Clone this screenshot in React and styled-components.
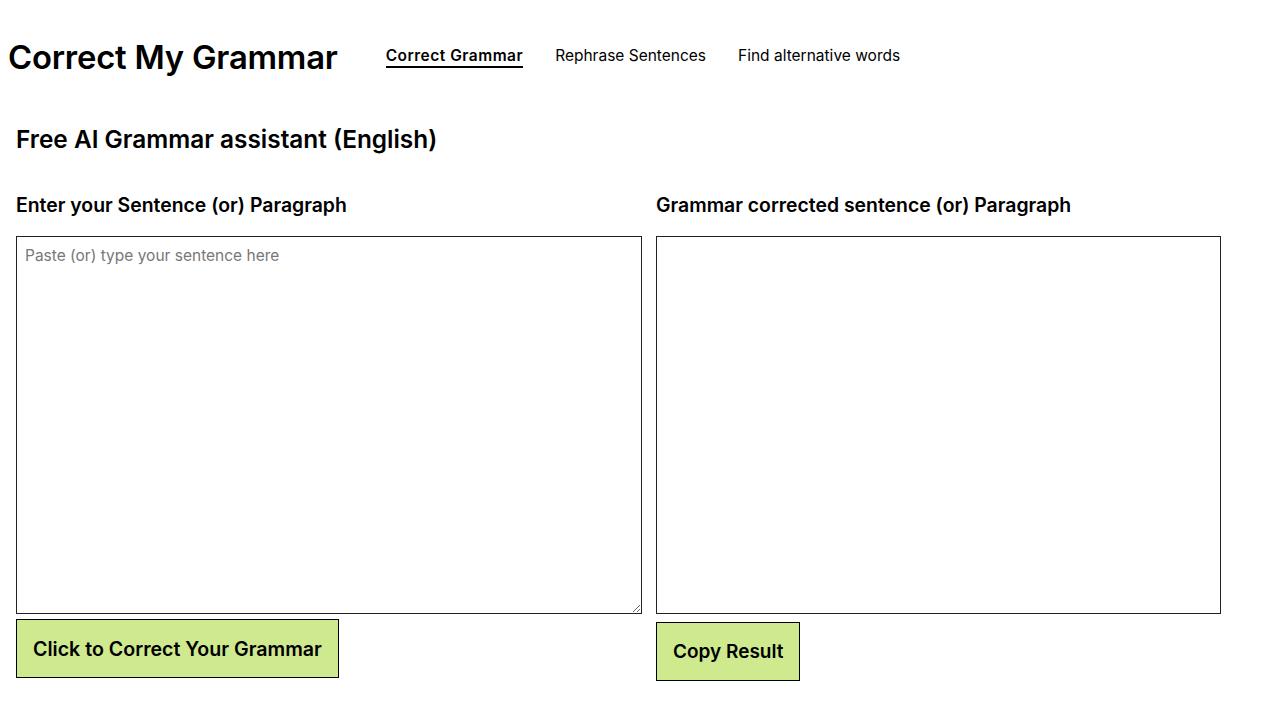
import React from "react";
import styled, { createGlobalStyle } from "styled-components";

const Global = createGlobalStyle`
  * { box-sizing: border-box; }
  body {
    margin: 0;
    background: #fff;
    color: #000;
    font-family: "Inter", "DejaVu Sans", sans-serif;
  }
`;

const Page = styled.div`
  padding: 0 8px;
`;

const Header = styled.header`
  display: flex;
  align-items: center;
  gap: 48px;
  height: 112px;
  padding-top: 2px;
`;

const Title = styled.h1`
  margin: 0;
  font-size: 32.8px;
  font-weight: 600;
  letter-spacing: -0.2px;
  white-space: nowrap;
`;

const Nav = styled.nav`
  display: flex;
  gap: 32px;
  margin-top: 0;
`;

const NavLink = styled.a`
  font-size: 15.5px;
  font-weight: ${(p) => (p.$active ? 600 : 400)};
  letter-spacing: ${(p) => (p.$active ? "0.5px" : "0")};
  color: #000;
  text-decoration: none;
  padding-bottom: 1px;
  border-bottom: 2px solid ${(p) => (p.$active ? "#000" : "transparent")};
  cursor: pointer;
`;

const Main = styled.main`
  padding: 0 8px;
`;

const Heading = styled.h2`
  margin: 0;
  font-size: 24.4px;
  font-weight: 600;
  line-height: 54px;
`;

const Columns = styled.div`
  display: flex;
  gap: 14px;
  margin-top: 28px;
`;

const Column = styled.section`
  display: flex;
  flex-direction: column;
  width: ${(p) => p.$w}px;
`;

const Label = styled.label`
  font-size: 19.4px;
  font-weight: 600;
  line-height: 22px;
  margin-bottom: 20px;
`;

const Input = styled.textarea`
  width: 100%;
  height: 378px;
  border: 1px solid #222;
  border-radius: 0;
  padding: 8px;
  font-family: "Inter", "DejaVu Sans", sans-serif;
  font-size: 15.5px;
  line-height: 22px;
  color: #000;
  resize: vertical;
  outline: none;
  margin: 0;
  display: block;

  &::placeholder {
    color: #777;
  }
`;

const Output = styled.div`
  width: 100%;
  height: 378px;
  border: 1px solid #222;
  padding: 8px;
`;

const Button = styled.button`
  align-self: flex-start;
  margin-top: ${(p) => p.$mt}px;
  height: 59px;
  padding: 0 16px;
  background: #cfe98f;
  border: 1px solid #000;
  border-radius: 0;
  font-family: "Inter", "DejaVu Sans", sans-serif;
  font-size: ${(p) => p.$fs}px;
  font-weight: 600;
  color: #000;
  cursor: pointer;
`;

export default function App() {
  return (
    <>
      <Global />
      <Page>
        <Header>
          <Title>Correct My Grammar</Title>
          <Nav>
            <NavLink $active>Correct Grammar</NavLink>
            <NavLink>Rephrase Sentences</NavLink>
            <NavLink>Find alternative words</NavLink>
          </Nav>
        </Header>
        <Main>
          <Heading>Free AI Grammar assistant (English)</Heading>
          <Columns>
            <Column $w={626}>
              <Label>Enter your Sentence (or) Paragraph</Label>
              <Input placeholder="Paste (or) type your sentence here" />
              <Button $mt={5} $fs={19.6}>Click to Correct Your Grammar</Button>
            </Column>
            <Column $w={565}>
              <Label>Grammar corrected sentence (or) Paragraph</Label>
              <Output />
              <Button $mt={8} $fs={19}>Copy Result</Button>
            </Column>
          </Columns>
        </Main>
      </Page>
    </>
  );
}
